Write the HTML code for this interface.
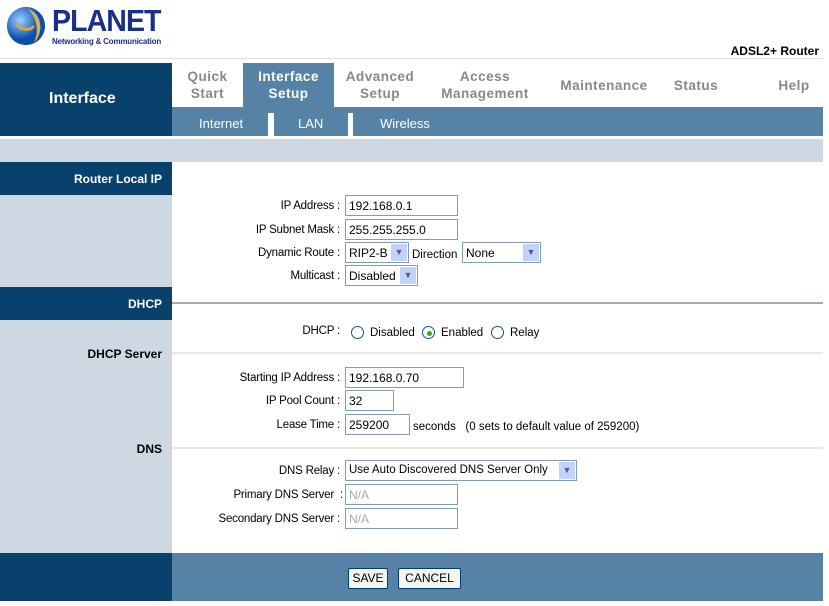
<!DOCTYPE html>
<html><head><meta charset="utf-8"><style>
*{margin:0;padding:0;box-sizing:border-box}
body{width:829px;height:606px;background:#fff;position:relative;font-family:"Liberation Sans",Arial,sans-serif;font-size:12px;color:#000;overflow:hidden}
.a{position:absolute}
.dk{background:#07416c}
.md{background:#5682a5}
.lt{background:#cdd8e2}
.nav{position:absolute;top:68px;color:#888;font-weight:bold;font-size:13.5px;text-align:center;line-height:17px;letter-spacing:.5px}
.sub{position:absolute;top:116px;color:#fff;font-size:13px}
.lbl{position:absolute;text-align:right;right:489px;font-size:11.5px;white-space:nowrap;letter-spacing:-.2px}
.in{position:absolute;height:21px;border:1px solid #7f9db9;background:#fff;font-size:12px;padding:3px 3px;white-space:nowrap}
.sel{position:absolute;height:21px;border:1px solid #7f9db9;background:#fff;font-size:12px;padding:3px 3px;white-space:nowrap}
.sel i{position:absolute;right:1px;top:1px;width:16px;height:17px;background:#c1d3fb;color:#4d6185;font-style:normal;font-size:9px;text-align:center;line-height:17px}
.lh{position:absolute;left:0;width:162px;text-align:right;color:#000;font-weight:bold;font-size:12px}
.rd{position:absolute;width:13px;height:13px;border:1px solid #1c5180;border-radius:50%;background:#fff}
.hr{position:absolute;left:172px;width:651px;height:2px;background:#e8e8e8}
.btn{position:absolute;top:568px;height:21px;border:1px solid #003c74;border-radius:2px;background:#f4f4f0;font-size:12px;text-align:center;line-height:19px}
</style></head><body>
<svg class="a" style="left:5px;top:5px" width="42" height="42" viewBox="0 0 44 44"><defs><radialGradient id="g" cx="35%" cy="35%"><stop offset="0" stop-color="#9dd0ff"/><stop offset="1" stop-color="#0a4fb0"/></radialGradient></defs><circle cx="22" cy="22" r="20" fill="url(#g)"/><path d="M24 4 C38 8 42 28 30 40 C36 28 34 14 24 4Z" fill="#e0b040"/><path d="M12 20 C16 26 26 28 30 22" stroke="#d9a93a" stroke-width="3" fill="none"/></svg>
<div class="a" style="left:52px;top:3px;font-size:31px;font-weight:900;color:#1a2f86;letter-spacing:-1px;transform:scaleX(.92);transform-origin:left">PLANET</div>
<div class="a" style="left:52px;top:37px;font-size:8px;font-weight:bold;color:#1a2f86;letter-spacing:-.2px">Networking &amp; Communication</div>
<div class="a" style="right:10px;top:44px;font-size:12px;font-weight:bold">ADSL2+ Router</div>
<div class="a" style="left:0;top:58px;width:823px;height:1px;background:#ddd"></div>
<div class="a dk" style="left:0;top:63px;width:172px;height:73px"></div>
<div class="a" style="left:49px;top:90px;color:#fff;font-weight:bold;font-size:16px">Interface</div>
<div class="a md" style="left:243px;top:63px;width:91px;height:44px"></div>
<div class="a md" style="left:172px;top:107px;width:651px;height:29px"></div>
<div class="a" style="left:268px;top:113px;width:6px;height:23px;background:#fff"></div>
<div class="a" style="left:348px;top:113px;width:5px;height:23px;background:#fff"></div>
<div class="nav" style="left:172px;width:71px">Quick<br>Start</div>
<div class="nav" style="left:243px;width:91px;color:#fff">Interface<br>Setup</div>
<div class="nav" style="left:334px;width:92px">Advanced<br>Setup</div>
<div class="nav" style="left:426px;width:118px">Access<br>Management</div>
<div class="nav" style="left:545px;width:118px;top:77px">Maintenance</div>
<div class="nav" style="left:663px;width:66px;top:77px">Status</div>
<div class="nav" style="left:765px;width:58px;top:77px">Help</div>
<div class="sub" style="left:199px">Internet</div>
<div class="sub" style="left:298px">LAN</div>
<div class="sub" style="left:380px">Wireless</div>
<div class="a lt" style="left:0;top:139px;width:823px;height:23px"></div>
<div class="a lt" style="left:0;top:162px;width:172px;height:391px"></div>
<div class="a dk" style="left:0;top:162px;width:172px;height:33px"></div>
<div class="lh" style="top:172px;color:#fff">Router Local IP</div>
<div class="a dk" style="left:0;top:287px;width:172px;height:33px"></div>
<div class="lh" style="top:297px;color:#fff">DHCP</div>
<div class="lh" style="top:347px">DHCP Server</div>
<div class="lh" style="top:442px">DNS</div>
<div class="a" style="left:172px;top:302px;width:651px;height:2px;background:#b0a898"></div>
<div class="hr" style="top:352px"></div>
<div class="hr" style="top:447px"></div>
<div class="lbl" style="top:200px">IP Address :</div>
<div class="in" style="left:345px;top:195px;width:113px">192.168.0.1</div>
<div class="lbl" style="top:224px">IP Subnet Mask :</div>
<div class="in" style="left:345px;top:219px;width:113px">255.255.255.0</div>
<div class="lbl" style="top:247px">Dynamic Route :</div>
<div class="sel" style="left:345px;top:242px;width:64px">RIP2-B<i>&#9660;</i></div>
<div class="a" style="left:412px;top:249px;font-size:11.5px">Direction</div>
<div class="sel" style="left:462px;top:242px;width:79px">None<i>&#9660;</i></div>
<div class="lbl" style="top:270px">Multicast :</div>
<div class="sel" style="left:345px;top:265px;width:73px">Disabled<i>&#9660;</i></div>
<div class="lbl" style="top:325px">DHCP :</div>
<div class="rd" style="left:351px;top:326px"></div><div class="a" style="left:370px;top:327px;font-size:11.5px">Disabled</div>
<div class="rd" style="left:422px;top:326px"></div><div class="a" style="left:427px;top:331px;width:5px;height:5px;border-radius:50%;background:#3a3"></div><div class="a" style="left:441px;top:327px;font-size:11.5px">Enabled</div>
<div class="rd" style="left:491px;top:326px"></div><div class="a" style="left:510px;top:327px;font-size:11.5px">Relay</div>
<div class="lbl" style="top:372px">Starting IP Address :</div>
<div class="in" style="left:345px;top:367px;width:119px">192.168.0.70</div>
<div class="lbl" style="top:395px">IP Pool Count :</div>
<div class="in" style="left:345px;top:390px;width:49px">32</div>
<div class="lbl" style="top:419px">Lease Time :</div>
<div class="in" style="left:345px;top:414px;width:65px">259200</div>
<div class="a" style="left:413px;top:421px;font-size:11.5px">seconds &nbsp;&nbsp;(0 sets to default value of 259200)</div>
<div class="lbl" style="top:465px">DNS Relay :</div>
<div class="sel" style="left:345px;top:460px;width:232px;font-size:11.5px">Use Auto Discovered DNS Server Only<i>&#9660;</i></div>
<div class="lbl" style="top:489px;right:486px">Primary DNS Server &nbsp;:</div>
<div class="in" style="left:345px;top:484px;width:113px;color:#aaa">N/A</div>
<div class="lbl" style="top:513px">Secondary DNS Server :</div>
<div class="in" style="left:345px;top:508px;width:113px;color:#aaa">N/A</div>
<div class="a dk" style="left:0;top:553px;width:172px;height:48px"></div>
<div class="a md" style="left:172px;top:553px;width:651px;height:48px"></div>
<div class="btn" style="left:348px;width:40px">SAVE</div>
<div class="btn" style="left:398px;width:63px">CANCEL</div>
</body></html>
